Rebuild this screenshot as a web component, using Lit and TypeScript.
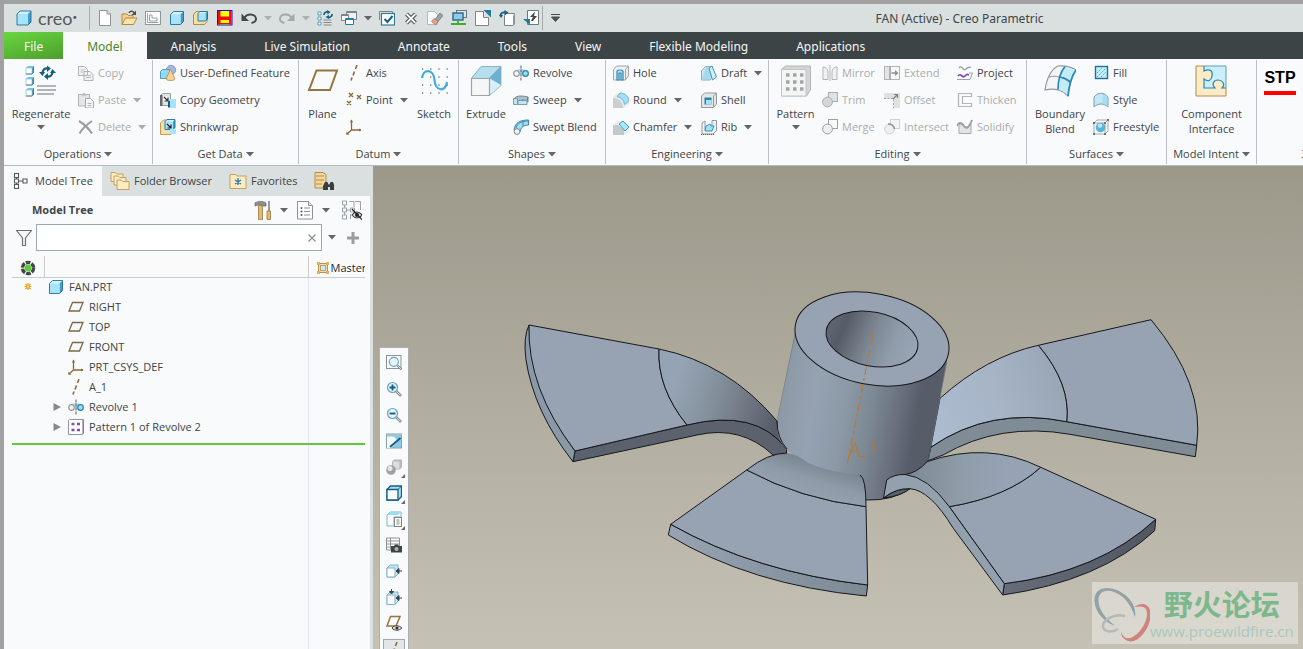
import { LitElement, html, svg, css, nothing } from "lit";
import type { TemplateResult } from "lit";
import { customElement, property } from "lit/decorators.js";
import { classMap } from "lit/directives/class-map.js";

/* ---------- icon artwork ---------- */

const cube = (x: number, y: number, s: number, d: number) => svg`
  <path d="M${x} ${y + d}l${d} ${-d}h${s}l${-d} ${d}z" fill="#d3f0fb"/>
  <path d="M${x + s} ${y + d}l${d} ${-d}v${s}l${-d} ${d}z" fill="#3f9ccb"/>
  <rect x=${x} y=${y + d} width=${s} height=${s} fill="#a5e4fa"/>
  <path d="M${x} ${y + d}l${d} ${-d}h${s}v${s}l${-d} ${d}h${-s}z" fill="none" stroke="#1b7099" stroke-width=".9"/>`;

const paleCube = (x: number, y: number, s: number, d: number) => svg`
  <path d="M${x} ${y + d}l${d} ${-d}h${s}l${-d} ${d}z" fill="#6cc6ec"/>
  <path d="M${x + s} ${y + d}l${d} ${-d}v${s}l${-d} ${d}z" fill="#2f86ad"/>
  <rect x=${x} y=${y + d} width=${s} height=${s} fill="#fff" stroke="#8cc3dc" stroke-width=".8"/>
  <path d="M${x} ${y + d + s}h${s}l${d} ${-d}" fill="none" stroke="#5a8296"/>`;

const sheet = svg`<path d="M2.500 .5h7.500l3.500 3.500v11.500h-11z" fill="#fff" stroke="#8d9394"/><path d="M10 .5v3.500h3.500" fill="#e1e5e5" stroke="#8d9394"/>`;

const axisMark = svg`<path d="M11 0L9.500 4M8.500 6.500L7 10.500M6 12.500L5 15.500" stroke="#8a6a36" stroke-width="1.6"/>`;

const csys = svg`<path d="M5.500 1v10H15M5.500 11L1 15" fill="none" stroke="#8a6a36" stroke-width="1.3"/><path d="M4 3.500h3L5.500 .500zM13 9.500v3l2.500-1.500zM.5 12.500l3 3-3.200.2z" fill="#8a6a36"/>`;

const revolve = svg`<path d="M3 6c2-3 8-3 10 0v3H3z" fill="#b8dcec"/><circle cx="3.500" cy="8.500" r="2.800" fill="#f2f4f5" stroke="#8f999d" stroke-width="1.200"/><circle cx="12.500" cy="8.500" r="2.800" fill="#9fdcf5" stroke="#2b87b3" stroke-width="1.300"/><path d="M8 .5v15" stroke="#55595a" stroke-dasharray="3 1"/>`;

const lens = svg`<path d="M10 10l5 5" stroke="#8b9194" stroke-width="2.600"/><path d="M10 10l4.500 4.500" stroke="#d5d9da" stroke-width="1"/><circle cx="6.500" cy="6.500" r="5" fill="#e6f5fb" stroke="#63a5c4" stroke-width="1.200"/>`;

const folder = (x: number, y: number, w: number, h: number) => svg`
  <path d="M${x} ${y}h${w * 0.35}l1.500 1.500h${w * 0.65 - 1.5}v${h - 1.5}h${-w}z" fill="#fdebc4" stroke="#c09a52" stroke-width=".9"/>`;

const swirl = svg`<path d="M3.500 8c0-3 2-5 5-4.500" fill="none" stroke="#155f85" stroke-width="2.200"/><path d="M8 .5l4 3-4 3.500z" fill="#155f85"/><path d="M0 7h6L3.500 11z" fill="#155f85"/><path d="M13.500 7c0 3-2 5-5 4.500" fill="none" stroke="#155f85" stroke-width="2.200"/><path d="M9 8v7l-4-3.500z" fill="#155f85"/><path d="M11 8h6L13.500 4z" fill="#155f85"/>`;

const icons: Record<string, [number, TemplateResult]> = {
  logo: [16, cube(1, 1, 11, 3)],
  newFile: [16, sheet],
  open: [16, svg`<path d="M1 14.500V4h5l1.500 1.500H12V8" fill="#f3cf8d" stroke="#b38a45"/><path d="M1 14.500L4.500 8H16l-3.500 6.500z" fill="#fce3ae" stroke="#b38a45"/><path d="M8 3c1-2 4-2.500 5 0" fill="none" stroke="#4c4f50" stroke-width="1.400"/><path d="M15 .5v4.500h-4.500z" fill="#4c4f50"/>`],
  drawing: [16, svg`<rect x=".5" y="1.500" width="15" height="13" fill="#fbfcfc" stroke="#8f9798"/><path d="M2.500 3.500v9h11M4.500 5h2.500v3h5v3h-7.500z" fill="none" stroke="#9aa2a3"/>`],
  part: [16, cube(1.5, 1.5, 10, 3)],
  assembly: [16, svg`<path d="M.5 4.500l2.500-3h11v10l-2.500 3H.500z" fill="#f6dda5" stroke="#b08c4b"/>${cube(5, 1.500, 7.500, 2)}`],
  stp: [16, svg`<rect x=".5" y=".5" width="14.500" height="14.500" fill="#ff0" stroke="#1212e0"/><path d="M1 1h2.500v13.500H1zM12 1h2.500v13.500H12zM3.500 6.500H12v3.500H3.500z" fill="#f10d0d"/><path d="M3 13.500h9" stroke="#f10d0d" stroke-width="1"/>`],
  undo: [16, svg`<path d="M3 8.500C6 3 14 3.500 15 8.500c.3 2.500-2 4-4.500 4.500" fill="none" stroke="#43484a" stroke-width="1.900"/><path d="M.5 3.500v7.500h7.500z" fill="#43484a"/>`],
  redo: [16, svg`<path d="M13 8.500C10 3 2 3.500 1 8.500c-.3 2.500 2 4 4.500 4.500" fill="none" stroke="#a3a9aa" stroke-width="1.900"/><path d="M15.500 3.500v7.500H8z" fill="#a3a9aa"/>`],
  regen: [16, svg`<path d="M1 2h3v3H1zM1 7h3v3H1zM1 12h3v3H1z" fill="#fff" stroke="#5d99b5"/><path d="M6.500 10h8M6.500 12.500h8M6.500 15h8" stroke="#83898a"/><path d="M7 5a3 3 0 0 1 4-3M15 4a3 3 0 0 1-4.500 3" fill="none" stroke="#155f85" stroke-width="1.700"/><path d="M10 0l3.500 2L10.500 4.500zM12 5v4L8.500 7z" fill="#155f85"/>`],
  windows: [16, svg`<path d="M5.500 1.500h10v8h-10z" fill="#eef1f1" stroke="#7d8586"/><path d="M.5 4.500h7v6h-7z" fill="#fff" stroke="#7d8586"/><path d="M.5 5.500h7M5.500 2.500h10" stroke="#7d8586"/><path d="M4.500 8.500h8v6h-8z" fill="#fff" stroke="#2d7aa0"/><path d="M4.500 9.500h8" stroke="#2d7aa0"/>`],
  check: [16, svg`<path d="M.5 10V1.500h13V4" fill="none" stroke="#7d8586"/><rect x="2.500" y="3.500" width="13" height="11.500" fill="#fff" stroke="#2d7aa0" stroke-width="1.200"/><path d="M5.500 9l3 3 5-6" fill="none" stroke="#155f85" stroke-width="2"/>`],
  closeAll: [16, svg`<path d="M3.500 4l9 9M12.500 4l-9 9" stroke="#55595a" stroke-width="4"/><path d="M3.700 4.200l8.600 8.600M12.300 4.200l-8.600 8.600" stroke="#fff" stroke-width="1.900"/>`],
  erase: [16, svg`<path d="M.5 1.500h7l3 3v10H.500z" fill="#f8f9f9" stroke="#b3b8b9"/><path d="M6 12l7-9 3 2.500-7 8.500z" fill="#9aa1a3" stroke="#6b6f70" stroke-width=".7"/><path d="M4.500 11.500l2.500-3 4 3-2.500 3.500z" fill="#e0a98c" stroke="#a95d4b" stroke-width=".6"/>`],
  screens: [16, svg`<rect x="5.500" y=".5" width="10" height="7" fill="#cfeaf5" stroke="#6b7a80"/><rect x="2" y="3" width="10" height="7" fill="#83d0f0" stroke="#3d6274" stroke-width="1.400"/><path d="M7 10v4M0 14h15" stroke="#3fae2c" stroke-width="1.800"/>`],
  fit: [16, svg`<path d="M.500 1.500h8v6h5v8H.500z" fill="#fff" stroke="#7d8586"/><path d="M8.500 0H16v7.500z" fill="#1f7aa5"/>`],
  paste2: [16, svg`<path d="M5.500 5.500l2-2h8.500v10l-2 2H5.500z" fill="#fff" stroke="#7d8586"/><path d="M14 5.500v10l2-2v-10z" fill="#8f9596"/><path d="M1.500 6c0-3 2-4 5-3.500" fill="none" stroke="#155f85" stroke-width="1.900"/><path d="M5.500 0l4 2.500-4 3zM0 5h4L2 8z" fill="#155f85"/>`],
  swap: [16, svg`<path d="M4.500 .5h11v14h-11z" fill="#fff" stroke="#6f7778"/><path d="M12 1.500L7 7h3l-2 4h2l4-5h-3z" fill="#43484a"/><path d="M0 9h7v6z" fill="#1f7aa5"/>`],

  regenerate: [32, svg`${paleCube(1, 1, 6, 2)}${paleCube(1, 12, 6, 2)}${paleCube(1, 23, 6, 2)}<g transform="translate(14 0)">${swirl}</g><path d="M12 21h19M12 25h19M12 29h17" stroke="#9b9fa0" stroke-width="1.600"/>`],
  copy: [16, svg`<path d="M.5 1.500h6l3 3v6h-9zM6 6.500h6l3 3v6H6z" fill="#f0f2f2" stroke="#afb5b6"/><path d="M2.500 5h4M2.500 7h3M8 10.500h5M8 12.500h5" stroke="#b9bebf"/>`],
  paste: [16, svg`<path d="M.5 2.500h11V14H.500z" fill="#e3e6e7" stroke="#afb5b6"/><path d="M3.500 3.500L6 .5l2.500 3z" fill="#b2b8b9"/><path d="M7.500 6.500h5l3 3v6.500h-8z" fill="#f6f7f7" stroke="#a5abac"/><path d="M9.500 11.500h4M9.500 13.500h4" stroke="#b0b6b7"/>`],
  remove: [16, svg`<path d="M1 2c5 3 10 8 13 12.500M14 2C9 5.500 4 10 1.500 14.500" fill="none" stroke="#9b9fa0" stroke-width="2.100"/>`],
  udf: [16, svg`<circle cx="11" cy="5" r="4.700" fill="#a9b6df" stroke="#7e8ec4" stroke-width=".8"/><path d="M.5 6.500l2-2h7v7l-2 2h-7z" fill="#96d9f4" stroke="#4b9fc1"/><path d="M10.500 4l4.500 10c-1 2-8 2-9 0z" fill="#f1d29a" stroke="#b48d4b" stroke-width=".8"/>`],
  copyGeom: [16, svg`<path d="M.500 3.500l2-2h8v6l-2 2v4h-8z" fill="#dfe3e4" stroke="#9ba2a3"/><path d="M0 3h2.500v11H0z" fill="#65696a"/><path d="M3.500 4.500h5v5h-5z" fill="#fff"/><path d="M4 5l4 4M8 5.500V9H4.500" fill="none" stroke="#333" stroke-width="1.200"/><path d="M9 7h7v3H9zM10 10h6v6h-6z" fill="#a5e4fa"/><path d="M8 9h2v6.500H8z" fill="#155f85"/>`],
  shrinkwrap: [16, svg`<path d="M.500 4l3-3h5v5l4 3v5l-2 1.500H.500z" fill="#f8e0ae" stroke="#c49b4e"/>${cube(5, .5, 8, 2)}<path d="M7 5l4 4M11 5.500V9H7.500" fill="none" stroke="#223" stroke-width="1.200"/><path d="M10 10h6v5h-6z" fill="#a5e4fa"/>`],

  plane: [32, svg`<path d="M9.500 5.500h20.500l-7 19.500H2z" fill="none" stroke="#94763e" stroke-width="2"/>`],
  axis: [16, axisMark],
  point: [16, svg`<path d="M3 1l4 4M7 1L3 5M11 3l4 4M15 3l-4 4M1 9l4 4M5 9l-4 4" stroke="#8a6a36" stroke-width="1.400"/>`],
  csys: [16, csys],
  sketch: [32, svg`<path d="M4 4h26M4 12h26M4 20h26M4 28h26" stroke="#333" stroke-width="1.200" stroke-dasharray="1.200 7"/><path d="M4 13C5 3 16 4 16.500 15s11 13 12.500 2" fill="none" stroke="#41abdb" stroke-width="2.200"/>`],
  extrude: [32, svg`<path d="M1 13L11 1h20L20 13z" fill="#b5deee"/><path d="M19 13L31 1v19L19 31z" fill="#d5f0fa"/><path d="M19 13L31 1v19z" fill="#6db0cf"/><path d="M1.500 13.500h18v17h-18z" fill="#f5f6f6" stroke="#9ea5a6" stroke-width="1.200"/><path d="M1.500 13.500L11 1.500h20v19L19.500 30.500M19.500 13.500l11.500-12" fill="none" stroke="#84a9ba" stroke-width=".8"/>`],
  revolve: [16, revolve],
  sweep: [16, svg`<path d="M1 8c0-4 6-5 14-3v5l-4-2c-2-1-3 1-4 2H5z" fill="#a9bfca" stroke="#6e8a97"/><path d="M5 8.500h9l1-3" fill="none" stroke="#3d7a99"/><path d="M.500 6.500h4v6h-4zM5 8.500h9v4H5z" fill="#c2e5f3" stroke="#7396a5" stroke-width=".9"/>`],
  sweptBlend: [16, svg`<path d="M1 11C2 3 8 1 15.500 1v5C11 6 8 8 7 13z" fill="#a6daf0" stroke="#3d87a8"/><path d="M3 9c1-5 6-7 12-7M10 2v5" fill="none" stroke="#3d87a8"/><circle cx="4" cy="12.500" r="2.900" fill="#eef3f5" stroke="#7c868a"/>`],

  hole: [16, svg`<path d="M.5 4.500l3-3.500h12v10l-3 4H.500z" fill="#eceeef" stroke="#a0a7a8"/><path d="M4 15V6.500c0-2 6-2 6 0V15h-2V8H6v7z" fill="#bfe8f7" stroke="#2b87b3" stroke-width="1.200"/><path d="M12.500 15V4.500l3-3.500" fill="none" stroke="#a0a7a8"/>`],
  round: [16, svg`<path d="M0 5l4-4h5l7 7v4l-5 4H0z" fill="#e9ebec"/><path d="M0 6c6 0 10 4 10 10H0z" fill="#c9ced0"/><path d="M7 1c5 0 8.500 3.500 9 8l-4.500 3.500C11 8.500 8.500 5.500 4 4.500z" fill="#a5def5" stroke="#56a9cb" stroke-width=".8"/>`],
  chamfer: [16, svg`<path d="M0 6l4-4h5l7 7v4l-5 3H0z" fill="#eaeced"/><path d="M0 6h5l6 5v5H0z" fill="#c3c9cb"/><path d="M6 5l4-3 6 6-4 4z" fill="#a9e6fa" stroke="#3c9ec5"/>`],
  draft: [16, svg`<path d="M.5 6l4-4.500h7v10L9 15H.500z" fill="#cbe7f1" stroke="#8da9b3"/><path d="M5.500 2L11 1v11l-5 2.500H.500z" fill="#a5d9ed"/><path d="M8 3l3-2 4.500 11-4 3z" fill="#d4f1fb" stroke="#3f97ba"/>`],
  shell: [16, svg`<path d="M.5 4l3-3h12v11l-3 3.500H.500z" fill="#e4e7e8" stroke="#929a9b"/><path d="M3.500 5.500h7v7h-7z" fill="#2d82a8"/><path d="M5 8h5.500v4.500H5z" fill="#a5e4fa"/><path d="M12.500 15V4l3-3" fill="none" stroke="#929a9b"/>`],
  rib: [16, svg`<path d="M1 15V4l3-2v9h7V1.500h4.500v10L12 15z" fill="#eef4f6" stroke="#8c9a9f"/><path d="M5 7l4-2 1 2h3l-2 5H4z" fill="#a2e0f7" stroke="#2b87b3" stroke-width=".9"/><path d="M0 15.500h13" stroke="#55595a" stroke-dasharray="1 1"/>`],

  pattern: [32, svg`<path d="M1.500 4.500l4-3.500h25v24l-4 6h-25z" fill="#d3d5d5" stroke="#b4b8b8"/><path d="M1.500 4.500h24.500V31H1.500z" fill="#f3f4f4" stroke="#c3c6c6"/>${[10, 17, 24].map((y) => svg`<path d="M6 ${y}h3.500M13 ${y}h3.500M20 ${y}h3.500" stroke="#a3a6a6" stroke-width="3.500"/>`)}`],
  mirror: [16, svg`<path d="M1 2v12.500h5V7c0-3-2-5-5-5zM15 2v12.500h-5V7c0-3 2-5 5-5z" fill="#f0f2f2" stroke="#b1b7b8"/><path d="M8 0v16" stroke="#b1b7b8"/>`],
  trim: [16, svg`<rect x="6.500" y=".5" width="9" height="9" fill="#dfe2e3" stroke="#a9afb0"/><circle cx="5.500" cy="10" r="4.900" fill="#d3d7d8" stroke="#a9afb0"/>`],
  merge: [16, svg`<rect x="6.500" y=".5" width="9" height="9" fill="#f7f8f8" stroke="#9ba2a3"/><circle cx="5.500" cy="10" r="4.900" fill="#eceeef" stroke="#9ba2a3"/>`],
  extend: [16, svg`<rect x=".5" y="1.500" width="15" height="13" fill="#f5f6f6" stroke="#b1b7b8"/><path d="M1 2h5v12H1z" fill="#e3e6e6"/><path d="M6 1.500v13M7.500 8h5" fill="none" stroke="#8b9192" stroke-width="1.300"/><path d="M11 5l3.500 3L11 11z" fill="#8b9192"/>`],
  offset: [16, svg`<path d="M0 1h16v15h-6V7H0z" fill="#dde1e2"/><path d="M0 6.500h9.500V16" fill="none" stroke="#a3a9aa" stroke-dasharray="2 1.500"/><path d="M9 7l4-4M10 2.500h3.500V6" fill="none" stroke="#7f8586" stroke-width="1.200"/>`],
  intersect: [16, svg`<rect x="6.500" y=".5" width="9" height="9" fill="#f3f4f4" stroke="#cfd3d4"/><circle cx="5.500" cy="10" r="4.900" fill="#eceeef" stroke="#cfd3d4"/><path d="M4 5c4 0 6 2 6.500 5" fill="none" stroke="#8b9192" stroke-width="1.500"/>`],
  project: [16, svg`<path d="M2 3c3-4 4 4 7 1s3-1 5-2" fill="none" stroke="#9ba2a3" stroke-width="1.300"/><path d="M12 8h3.500L13 14.500H0" fill="none" stroke="#9ba2a3"/><path d="M1 11c3-4 4 3 7 0s3-1 4-1" fill="none" stroke="#7c3fb4" stroke-width="1.700"/>`],
  thicken: [16, svg`<path d="M1.500 1.500h13v3h-9v7h9v3h-13z" fill="#f8f9f9" stroke="#b1b7b8" stroke-width="1.200"/>`],
  solidify: [16, svg`<path d="M2 5v9.500h12V5c-2 2-3 5-5 4S5 4 2 5z" fill="#e1e4e5" stroke="#a3a9aa"/><path d="M0 7c2-5 5-3 7 0s5 2 8-6" fill="none" stroke="#9ba2a3" stroke-width="2"/>`],

  boundary: [32, svg`<path d="M1 25C3 12 8 4 14 1q10-1 18 4c-5 7-7 16-8 26-6-7-14-8-23-6z" fill="#f3f5f6" stroke="#8f999d" stroke-width="1.200"/><path d="M20 1.500l12 3.500c-5 7-7 16-8 26-3-4-6-5-9-6 0-8 1-17 5-23.500z" fill="#c3ecfa"/><path d="M5 12c7-2 14 0 21 6" fill="none" stroke="#8f999d"/><path d="M21 1.500c-5 6-7 14-7 23M16 12c5 1 9 3 11 6M32 5c-5 7-7 16-8 26" fill="none" stroke="#2787b4" stroke-width="1.700"/>`],
  fill: [16, svg`<rect x="2.500" y="1.500" width="12" height="12" fill="#c4eefc" stroke="#1f6f99" stroke-width="1.400"/><path d="M4 8l5-5M4 12l9-9M8 12l5-5" stroke="#4e9fbe" stroke-dasharray="1.500 1"/>`],
  style: [16, svg`<path d="M1 5c4-5 10-5 14 0v10c-4-4-10-4-14 0z" fill="#c2e8f6" stroke="#7c9fac"/><path d="M10 2c4 0 5 3 5 3v10c-2-2-4-3-6-3z" fill="#8fd1ea" opacity=".5"/>`],
  freestyle: [16, svg`<circle cx="7.500" cy="8.500" r="4.800" fill="#58b4da"/><circle cx="7" cy="6.500" r="2.300" fill="#b8e6f8"/><path d="M1 4l3-3h11v11l-3 3H1zM1 4h11v11M12 4l3-3" fill="none" stroke="#8d9596" stroke-width=".8"/><path d="M0 3h2v2H0zM0 14h2v2H0zM11 3h2v2h-2zM14 0h2v2h-2zM11 14h2v2h-2z" fill="#6c7172"/>`],
  component: [32, svg`<path d="M1 1h30v30H1z" fill="#fdebc8"/><path d="M9 1h22v22H9z" fill="#c9effb"/><path d="M9 1v5c6-3 9 0 8 5s-4 6-8 3v9h11c-4-4-1-8 3-8s8 4 4 8h4v8H1V1z" fill="#fdebc8"/><path d="M9 1v5c6-3 9 0 8 5s-4 6-8 3v9h11c-4-4-1-8 3-8s8 4 4 8h4" fill="none" stroke="#2b87b3" stroke-width="1.200"/><path d="M9 1H1v30h30v-8" fill="none" stroke="#b08c4b"/><path d="M9 1h22v22" fill="none" stroke="#5f9db5"/>`],

  treeTab: [16, svg`<path d="M3.500 4.500v7M5.500 8H10" stroke="#55595a"/><path d="M1.500 .5h4v4h-4zM1.500 6h4v4h-4zM1.500 11.500h4v4h-4zM10 6h4v4h-4z" fill="#fff" stroke="#55595a" stroke-width="1.100"/>`],
  folders: [20, svg`${folder(1, 1.5, 12, 9)}${folder(4, 5, 12, 9)}${folder(7, 9, 12, 9.500)}`],
  favorites: [18, svg`${folder(1, 2.500, 16, 14)}<path d="M9 6v7M6 8l6 4M12 8l-6 4" stroke="#1f7aa5" stroke-width="1.300"/>`],
  search: [20, svg`<path d="M1 1.500h8l3 2V17H1z" fill="#f4d79a" stroke="#b08c4b"/><path d="M2 5h8M2 9h8M2 13h6" stroke="#b08c4b"/><path d="M9 19v-4l2-4h2.500l1 2.500h1L16.500 11H19l1.500 4v4H16v-3h-2v3z" fill="#3b3e40"/>`],
  tools: [20, svg`<path d="M1 3c3-2 8-2 11 0v3H8V5H5C3 5 2 6 1 6z" fill="#8c9294" stroke="#5c6162" stroke-width=".7"/><path d="M4.500 5.500h4V20h-4z" fill="#e0b873" stroke="#a07a3d" stroke-width=".8"/><path d="M15 1v10" stroke="#7f8587" stroke-width="1.600"/><path d="M13 11h3.500v8.500H13z" fill="#e7b765" stroke="#a07a3d" stroke-width=".8"/>`],
  listDoc: [20, svg`<path d="M1.500 1.500h11l4 4v13.500h-15z" fill="#fff" stroke="#8d9394"/><path d="M12.500 1.500v4h4" fill="#e1e5e5" stroke="#8d9394"/><path d="M8 8h6M8 11.500h6M8 15h6" stroke="#8d9394"/><circle cx="5.500" cy="8" r="1" fill="#55595a"/><circle cx="5.500" cy="11.500" r="1" fill="#55595a"/><circle cx="5.500" cy="15" r="1" fill="#55595a"/>`],
  hideTree: [20, svg`<path d="M.5 1h4v4h-4zM.500 8h4v4h-4zM.500 15h4v4h-4zM8.500 8h4v4h-4zM2.500 5v3M2.500 12v3M4.500 10h4M7.500 1.500H12V7M13 1.500h5.500V10M8.500 14v5" fill="none" stroke="#9ba2a3"/><path d="M10 15c3-4 7-4 10 0-3 4-7 4-10 0z" fill="#dfe2e3" stroke="#3b3e40" stroke-width="1.200"/><circle cx="15" cy="15" r="2" fill="#222"/><path d="M10 9l10 10.500" stroke="#222" stroke-width="1.200"/>`],
  funnel: [16, svg`<path d="M.500 .5h15L9.500 8v7.500h-3V8z" fill="#f5f6f6" stroke="#6b7172" stroke-width="1.200"/>`],
  plus: [12, svg`<path d="M6 0v12M0 6h12" stroke="#9a9e9f" stroke-width="3"/>`],
  cross: [10, svg`<path d="M1.500 1.500l7 7M8.500 1.500l-7 7" stroke="#8a8f90" stroke-width="1.200"/>`],
  status: [16, svg`<circle cx="8" cy="8" r="5.600" fill="none" stroke="#3f4749" stroke-width="3.400" stroke-dasharray="4.700 1.160"/><circle cx="8" cy="8" r="3.500" fill="#62c93a"/>`],
  spark: [16, svg`<path d="M8 4v7M4.500 7.500h7M5.500 5l5 5M10.500 5l-5 5" stroke="#f09a1e" stroke-width="1.200"/><circle cx="8" cy="7.500" r="1" fill="#fff0b0"/>`],
  master: [12, svg`<rect x="1.500" y="1.500" width="9" height="9" fill="#f3dcae" stroke="#b9914c"/><rect x="3.500" y="3.500" width="5" height="5" fill="#c5ecf9" stroke="#b9914c" stroke-width=".8"/><path d="M0 0h3v3H0zM9 0h3v3H9zM0 9h3v3H0zM9 9h3v3H9z" fill="#d9b36d"/>`],
  planeSmall: [16, svg`<path d="M4.500 3.500H15L11.500 12H1z" fill="none" stroke="#7c6844" stroke-width="1.300"/>`],
  patternSmall: [16, svg`<path d="M.5 1.500l1-1h14v14l-1 1H.500z" fill="#fff" stroke="#9390a6"/><path d="M15 1v14" stroke="#7b5aa6"/><path d="M3.500 5h3M9 5h3M3.500 11h3M9 11h3" stroke="#7a52a8" stroke-width="2.500"/>`],
  expander: [8, svg`<path d="M.5 0v8L8 4z" fill="#85898a"/>`],

  refit: [16, svg`<rect x=".5" y=".5" width="14.500" height="13" fill="#f6f7f7" stroke="#8d9394"/><g transform="translate(2 1) scale(.9)">${lens}</g>`],
  zoomIn: [16, svg`${lens}<path d="M6.500 3.500v6M3.500 6.500h6" stroke="#155f85" stroke-width="1.900"/>`],
  zoomOut: [16, svg`${lens}<path d="M3.500 6.500h6" stroke="#155f85" stroke-width="1.900"/>`],
  repaint: [16, svg`<rect x=".5" y="1" width="15" height="14" fill="#8ccbe5" stroke="#8aa1aa"/><path d="M1 3.500h5c3 0 5 3 5 6L5 15H1z" fill="#f1fafd"/><path d="M14.500 5L4 14" stroke="#155f85" stroke-width="1.900"/><path d="M.5 2h15" stroke="#b9c4c8"/>`],
  shading: [16, svg`<path d="M6 2.500l2-2h8V8l-2 2.500H6z" fill="#b4b8b9"/><path d="M7 2.500h6.500v7H7z" fill="#dcdede"/><circle cx="5" cy="11" r="4.800" fill="#9ea2a3"/><circle cx="4" cy="9.500" r="2.500" fill="#e6e8e8"/>`],
  display: [16, svg`<path d="M1 4.500l3.500-3.500h11v10.500L12 15H1z" fill="#a9dff3" stroke="#155f85" stroke-width="1.300"/><path d="M1 4.500h11V15H1z" fill="#fff" stroke="#155f85" stroke-width="1.300"/><path d="M12 4.500l3.500-3.500" stroke="#155f85"/>`],
  views: [16, svg`<path d="M1 4l3-3h11v5H8v9H1z" fill="#f6fbfd" stroke="#7cb4cc"/><path d="M1 4l3-3h11l-3 3z" fill="#9bdcf3"/><rect x="8.500" y="6.500" width="7" height="9" fill="#fff" stroke="#7f8586"/><path d="M10.500 9h3M10.500 11h3M10.500 13h3" stroke="#7f8586"/>`],
  viewMgr: [16, svg`<path d="M.500 1h13v12H.500zM.500 4h13M.500 7h13M.500 10h13M4.500 1v12" fill="#fff" stroke="#8d9394"/><path d="M5 9h3l1-1.500h3l1 1.500h3v6.500H5z" fill="#3f4547"/><circle cx="10.500" cy="12" r="2" fill="#aeb5b7"/>`],
  clipA: [16, svg`<path d="M1 5l3-3h8v9l-3 3H1z" fill="#bfe8f7" stroke="#7cb4cc"/><path d="M1 5h8v9H1z" fill="#fff" stroke="#7cb4cc"/><path d="M16 8h-5M13 5.500v5L10 8z" fill="#3f4547" stroke="#3f4547"/>`],
  clipB: [16, svg`<path d="M1 6l3-3h8v9l-3 3.500H1z" fill="#bfe8f7" stroke="#7cb4cc"/><path d="M1 6h8v9.500H1z" fill="#fff" stroke="#7cb4cc"/><path d="M16 9h-5M13 6.500v5L10 9zM5.500 0v4M3.500 2.500h4l-2 2.500z" fill="#3f4547" stroke="#3f4547"/>`],
  datumFilter: [16, svg`<path d="M4.500 1.500H14L10 11H1z" fill="none" stroke="#94763e" stroke-width="1.500"/><path d="M6 13c2-3 7-3 10 0-3 3-8 3-10 0z" fill="#dfe2e3" stroke="#3f4547"/><circle cx="11" cy="13" r="1.600" fill="#333"/>`],
};

const icon = (name: string) => {
  const [box, art] = icons[name];
  return html`<svg width=${box} height=${box} viewBox="0 0 ${box} ${box}" aria-hidden="true">${art}</svg>`;
};

const caret = html`<svg class="caret" width="8" height="5" viewBox="0 0 8 5" aria-hidden="true"><path d="M0 0h8L4 4.500z" fill="currentColor"/></svg>`;

const controlStyles = css`
  button { font: inherit; color: inherit; background: none; border: 0; padding: 0; margin: 0; white-space: nowrap; }
  svg { display: block; flex: none; }
  .caret { color: #626667; }
  button:disabled .caret { color: #a9adae; }
`;

/* ---------- title bar ---------- */

@customElement("title-bar")
class TitleBar extends LitElement {
  static styles = [controlStyles, css`
    :host { display: flex; align-items: center; height: 28px; background: #dae0df; color: #404547; }
    .brand { display: flex; align-items: center; gap: 6px; padding: 0 12px; }
    .word { font: 18px/20px "Lato", sans-serif; color: #54595b; }
    .word sup { font-size: 8px; line-height: 0; vertical-align: 5px; }
    .rule { width: 1px; height: 24px; background: #a7adae; }
    .tools { display: flex; align-items: center; gap: 8px; padding: 0 3px 0 7px; }
    .tools button { display: flex; align-items: center; justify-content: center; height: 20px; }
    .tools .drop { width: 8px; margin: 0 -1px; }
    .dim .caret { color: #abb1b2; }
    .more { padding: 0 8px; }
    h1 { flex: 1; margin: 0; padding: 1px 0 0 48px; font: 400 12px/16px "Noto Sans", sans-serif; text-align: center; }
  `];

  render() {
    const items = ["newFile", "open", "drawing", "part", "assembly", "stp", "undo", "-dim", "redo", "-dim", "regen", "windows", "-", "check", "closeAll", "erase", "screens", "fit", "paste2", "swap"];
    return html`
      <div class="brand">${icon("logo")}<span class="word">creo<sup>•</sup></span></div>
      <span class="rule"></span>
      <div class="tools">
        ${items.map((i) => i.startsWith("-")
          ? html`<button class=${classMap({ drop: true, dim: i === "-dim" })} aria-label="More">${caret}</button>`
          : html`<button aria-label=${i}>${icon(i)}</button>`)}
      </div>
      <span class="rule"></span>
      <button class="more" aria-label="Customize toolbar"><svg width="9" height="8" viewBox="0 0 9 8"><path d="M0 .5h9M.5 3h8L4.500 7.500z" fill="#4c5051" stroke="#4c5051"/></svg></button>
      <h1>FAN (Active) - Creo Parametric</h1>`;
  }
}

/* ---------- ribbon ---------- */

type Command = { icon: string; text: string; drop?: boolean; off?: boolean };
type Column = { big: Command } | { list: Command[] };
type Group = { key: string; title: string; columns: Column[] };

const cmd = (i: string, text: string, flags = ""): Command => ({ icon: i, text, drop: flags.includes("v"), off: flags.includes("x") });

const groups: Group[] = [
  { key: "operations", title: "Operations", columns: [
    { big: cmd("regenerate", "Regenerate", "v") },
    { list: [cmd("copy", "Copy", "x"), cmd("paste", "Paste", "xv"), cmd("remove", "Delete", "xv")] } ] },
  { key: "getdata", title: "Get Data", columns: [
    { list: [cmd("udf", "User-Defined Feature"), cmd("copyGeom", "Copy Geometry"), cmd("shrinkwrap", "Shrinkwrap")] } ] },
  { key: "datum", title: "Datum", columns: [
    { big: cmd("plane", "Plane") },
    { list: [cmd("axis", "Axis"), cmd("point", "Point", "v"), cmd("csys", "")] },
    { big: cmd("sketch", "Sketch") } ] },
  { key: "shapes", title: "Shapes", columns: [
    { big: cmd("extrude", "Extrude") },
    { list: [cmd("revolve", "Revolve"), cmd("sweep", "Sweep", "v"), cmd("sweptBlend", "Swept Blend")] } ] },
  { key: "engineering", title: "Engineering", columns: [
    { list: [cmd("hole", "Hole"), cmd("round", "Round", "v"), cmd("chamfer", "Chamfer", "v")] },
    { list: [cmd("draft", "Draft", "v"), cmd("shell", "Shell"), cmd("rib", "Rib", "v")] } ] },
  { key: "editing", title: "Editing", columns: [
    { big: cmd("pattern", "Pattern", "v") },
    { list: [cmd("mirror", "Mirror", "x"), cmd("trim", "Trim", "x"), cmd("merge", "Merge", "x")] },
    { list: [cmd("extend", "Extend", "x"), cmd("offset", "Offset", "x"), cmd("intersect", "Intersect", "x")] },
    { list: [cmd("project", "Project"), cmd("thicken", "Thicken", "x"), cmd("solidify", "Solidify", "x")] } ] },
  { key: "surfaces", title: "Surfaces", columns: [
    { big: cmd("boundary", "Boundary Blend") },
    { list: [cmd("fill", "Fill"), cmd("style", "Style"), cmd("freestyle", "Freestyle")] } ] },
  { key: "intent", title: "Model Intent", columns: [{ big: cmd("component", "Component Interface") }] },
];

@customElement("command-ribbon")
class CommandRibbon extends LitElement {
  static styles = [controlStyles, css`
    :host { display: block; background: #f8fafc; }
    .tabs { display: flex; gap: 2px; height: 27px; background: #3d4446; color: #f4f6f6; font: 12px/16px "Noto Sans", sans-serif; }
    .tabs button { padding: 2px 23px 0; }
    .tabs .file { padding: 2px 20px 0; margin-right: -2px; background: linear-gradient(165deg, #6ad641, #4c9e2c); }
    .tabs .current { padding: 2px 24px 0; margin-right: -1px; background: #f8fafc; color: #4b852c; }
    .groups { display: grid; grid-template-columns: 149px 146px 160px 147px 163px 258px 140px 90px minmax(0, 1fr); padding: 1px 0; border-bottom: 1px solid #b2bbbd; overflow: hidden; }
    .group { display: flex; flex-direction: column; border-right: 1px solid #bcc1c3; min-width: 0; }
    .group:last-child { border: 0; }
    .columns { display: grid; flex: 1; align-items: start; }
    .operations { grid-template-columns: 74px 1fr; }
    .getdata { padding-left: 7px; }
    .datum { grid-template-columns: 47px 64px 1fr; }
    .shapes { grid-template-columns: 54px 1fr; }
    .engineering { grid-template-columns: 88px 1fr; padding-left: 7px; }
    .editing { grid-template-columns: 53px 62px 73px 1fr; }
    .surfaces { grid-template-columns: 66px 1fr; }
    .list { display: grid; grid-auto-rows: 26px; gap: 1px; justify-items: start; }
    .list button { display: flex; align-items: center; gap: 4px; }
    .list .caret { margin-left: 3px; }
    button:disabled { color: #aaadae; }
    .big { display: flex; flex-direction: column; align-items: center; padding-top: 5px; }
    .big button { display: flex; flex-direction: column; align-items: center; line-height: 15px; }
    .big .label { margin-top: 9px; width: min-content; white-space: normal; }
    .big .caret { margin-top: 4px; }
    .title { display: flex; align-items: center; justify-content: center; gap: 4px; height: 20px; margin-top: 4px; }
    .title button { display: flex; align-items: center; gap: 3px; }
    .stp { justify-self: start; margin: 4px 0 0 7px; width: 32px; height: 31px; box-sizing: border-box; border-bottom: 4px solid #f00; background: #fff; color: #000; font: 700 16px/27px "Liberation Sans", sans-serif; text-align: center; }
    .clipped { justify-content: flex-start; padding-left: 44px; color: #7c5a4a; white-space: nowrap; }
  `];

  private button(c: Command) {
    return html`<button ?disabled=${c.off} aria-label=${c.text || "Coordinate System"}>${icon(c.icon)}${c.text ? html`<span>${c.text}</span>` : nothing}${c.drop ? caret : nothing}</button>`;
  }

  private column(c: Column) {
    if ("list" in c) return html`<div class="list">${c.list.map((x) => this.button(x))}</div>`;
    return html`<div class="big"><button>${icon(c.big.icon)}<span class="label">${c.big.text}</span>${c.big.drop ? caret : nothing}</button></div>`;
  }

  render() {
    return html`
      <nav class="tabs">
        <button class="file">File</button><button class="current">Model</button>
        ${["Analysis", "Live Simulation", "Annotate", "Tools", "View", "Flexible Modeling", "Applications"].map((t) => html`<button>${t}</button>`)}
      </nav>
      <div class="groups">
        ${groups.map((g) => html`
          <section class="group">
            <div class="columns ${g.key}">${g.columns.map((c) => this.column(c))}</div>
            <div class="title"><button>${g.title}${caret}</button></div>
          </section>`)}
        <section class="group">
          <div class="columns"><button class="stp">STP</button></div>
          <div class="title clipped">3D</div>
        </section>
      </div>`;
  }
}

/* ---------- navigator ---------- */

type Node = { icon: string; text: string; level: number; open?: boolean };

const nodes: Node[] = [
  { icon: "part", text: "FAN.PRT", level: 0 },
  { icon: "planeSmall", text: "RIGHT", level: 1 },
  { icon: "planeSmall", text: "TOP", level: 1 },
  { icon: "planeSmall", text: "FRONT", level: 1 },
  { icon: "csys", text: "PRT_CSYS_DEF", level: 1 },
  { icon: "axis", text: "A_1", level: 1 },
  { icon: "revolve", text: "Revolve 1", level: 1, open: false },
  { icon: "patternSmall", text: "Pattern 1 of Revolve 2", level: 1, open: false },
];

@customElement("model-navigator")
class ModelNavigator extends LitElement {
  @property() query = "";

  static styles = [controlStyles, css`
    :host { display: flex; flex-direction: column; background: #f8fafc; border-right: 3px solid #dae0df; box-sizing: border-box; min-height: 0; }
    .tabs { display: flex; height: 30px; background: #dae0df; }
    .tabs button { display: flex; align-items: center; gap: 4px; padding: 0 9px 0 8px; }
    .tabs .current { gap: 6px; padding: 0 9px; background: #f8fafc; }
    .head { display: flex; align-items: center; height: 28px; padding: 0 8px 0 28px; }
    h2 { flex: 1; margin: 0; font-size: 11px; font-weight: 700; color: #3f4547; }
    .head .drop { padding: 0 8px 0 6px; }
    .head .last { padding-right: 12px; }
    .filter { display: flex; align-items: center; height: 27px; padding: 0 10px 0 12px; gap: 4px; }
    .box { flex: 1; display: flex; align-items: center; height: 27px; box-sizing: border-box; border: 1px solid #9cabac; background: #fff; padding-right: 4px; }
    input { flex: 1; min-width: 0; border: 0; outline: 0; background: none; font: inherit; }
    .filter .drop { padding: 0 6px 0 2px; }
    .filter .add { padding: 0 1px; }
    .tree { flex: 1; display: grid; margin: 5px 5px 0 8px; min-height: 0; overflow: hidden; }
    table { border-collapse: collapse; table-layout: fixed; width: 100%; height: 100%; }
    .c1 { width: 32px; }
    .c3 { width: 57px; }
    th, td { padding: 0; text-align: left; font-weight: 400; }
    thead tr { height: 21px; background: #fafafb; }
    th { border-bottom: 1px solid #c9cccd; padding-top: 3px; }
    th + th { border-left: 1px solid #c9cccd; color: #1d2a33; }
    td:last-child { border-left: 1px solid #e4e7e9; }
    tbody tr { height: 20px; }
    tbody .insert { height: 7px; }
    .insert td { border-bottom: 2px solid #60c83c; }
    tbody .rest { height: auto; }
    .center svg { margin: 0 auto; }
    .cell { display: flex; align-items: center; gap: 5px; padding-left: 3px; white-space: nowrap; overflow: hidden; }
    .row { padding-left: 4px; }
    .deep { padding-left: 24px; }
    .node { padding-left: 9px; gap: 7px; }
    .node span { display: flex; align-items: center; gap: 5px; }
    .master { gap: 2px; padding-left: 8px; }
  `];

  render() {
    return html`
      <nav class="tabs">
        <button class="current">${icon("treeTab")}<span>Model Tree</span></button>
        <button>${icon("folders")}<span>Folder Browser</span></button>
        <button>${icon("favorites")}<span>Favorites</span></button>
        <button aria-label="Search">${icon("search")}</button>
      </nav>
      <div class="head">
        <h2>Model Tree</h2>
        <button aria-label="Settings">${icon("tools")}</button><button class="drop" aria-label="Settings menu">${caret}</button>
        <button aria-label="Show">${icon("listDoc")}</button><button class="drop last" aria-label="Show menu">${caret}</button>
        <button aria-label="Hide columns">${icon("hideTree")}</button>
      </div>
      <div class="filter">
        ${icon("funnel")}
        <div class="box"><input type="text" aria-label="Filter model tree" .value=${this.query}><button aria-label="Clear">${icon("cross")}</button></div>
        <button class="drop" aria-label="Filter menu">${caret}</button>
        <button class="add" aria-label="Add filter">${icon("plus")}</button>
      </div>
      <div class="tree">
        <table>
          <colgroup><col class="c1"><col><col class="c3"></colgroup>
          <thead><tr>
            <th class="center" aria-label="Status">${icon("status")}</th><th aria-label="Name"></th>
            <th><div class="cell master">${icon("master")}Master</div></th>
          </tr></thead>
          <tbody>
            ${nodes.map((n) => html`<tr>
              <td class="center">${n.level === 0 ? icon("spark") : nothing}</td>
              <td>${n.open === undefined
                ? html`<div class=${classMap({ cell: true, row: n.level === 0, deep: n.level > 0 })}>${icon(n.icon)}${n.text}</div>`
                : html`<div class="cell node"><button aria-label="Expand ${n.text}">${icon("expander")}</button><span>${icon(n.icon)}${n.text}</span></div>`}</td>
              <td></td></tr>`)}
            <tr class="insert"><td></td><td></td><td></td></tr>
            <tr class="rest"><td></td><td></td><td></td></tr>
          </tbody>
        </table>
      </div>`;
  }
}

/* ---------- graphics area ---------- */

@customElement("graphics-view")
class GraphicsView extends LitElement {
  static styles = [controlStyles, css`
    :host { display: block; position: relative; overflow: hidden; background: linear-gradient(#9c998b, #c5c2b5); }
    .scene { position: absolute; inset: 0; width: 100%; height: 100%; }
    .edges path, .edges ellipse { stroke: #16181c; stroke-width: 1; stroke-linejoin: round; }
    .bar { position: absolute; left: 6px; top: 181px; display: flex; flex-direction: column; align-items: center; gap: 6px; width: 30px; padding: 5px 0; box-sizing: border-box; background: #f8fafc; border: 1px solid #adaeb2; }
    .bar button { position: relative; height: 20px; padding: 2px 0; box-sizing: border-box; }
    .more::after { content: ""; position: absolute; right: -3px; bottom: -1px; border: 2px solid transparent; border-right-color: #65696a; border-bottom-color: #65696a; }
    .bar .pressed { width: 22px; height: 22px; padding: 2px; border: 1px solid #a3a7aa; background: #e3e6e9; }
    .mark { position: absolute; right: 5px; bottom: 5px; display: flex; align-items: center; width: 206px; height: 62px; background: rgba(226, 223, 216, .75); }
    .mark p { margin: 0; text-align: center; white-space: nowrap; }
    .mark .zh { font: 700 29px/36px "Noto Sans CJK SC", sans-serif; color: #7db88c; }
    .mark .url { font-size: 15px; line-height: 20px; color: #a9c8bb; }
  `];

  render() {
    const tools: [string, boolean][] = [["refit", false], ["zoomIn", false], ["zoomOut", false], ["repaint", false], ["shading", true], ["display", true], ["views", true], ["viewMgr", false], ["clipA", false], ["clipB", false], ["datumFilter", false]];
    return html`
      <svg class="scene" viewBox="373 166 930 483" preserveAspectRatio="xMidYMid slice" role="img" aria-label="Fan model">
        <defs>
          <linearGradient id="hub" gradientUnits="userSpaceOnUse" x1="783" y1="395" x2="940" y2="422">
            <stop offset="0" stop-color="#8d99a6"/><stop offset=".2" stop-color="#95a2b2"/><stop offset=".4" stop-color="#8b98a5"/><stop offset=".55" stop-color="#7d8a95"/><stop offset=".72" stop-color="#6b717e"/><stop offset=".85" stop-color="#575d69"/><stop offset="1" stop-color="#555b67"/>
          </linearGradient>
          <linearGradient id="bore" gradientUnits="userSpaceOnUse" x1="828" y1="330" x2="916" y2="348">
            <stop offset="0" stop-color="#5f6671"/><stop offset=".16" stop-color="#565c67"/><stop offset=".34" stop-color="#6e747f"/><stop offset=".5" stop-color="#7d8994"/><stop offset=".75" stop-color="#8f9cab"/><stop offset="1" stop-color="#98a5b5"/>
          </linearGradient>
          <linearGradient id="bendL" gradientUnits="userSpaceOnUse" x1="668" y1="405" x2="774" y2="440">
            <stop offset="0" stop-color="#96a3b4"/><stop offset=".35" stop-color="#84919d"/><stop offset=".65" stop-color="#727984"/><stop offset="1" stop-color="#535965"/>
          </linearGradient>
          <linearGradient id="bendR" gradientUnits="userSpaceOnUse" x1="935" y1="425" x2="1066" y2="385">
            <stop offset="0" stop-color="#acbbcf"/><stop offset=".5" stop-color="#a6b4c6"/><stop offset="1" stop-color="#98a5b4"/>
          </linearGradient>
          <linearGradient id="bendB" gradientUnits="userSpaceOnUse" x1="818" y1="462" x2="806" y2="500">
            <stop offset="0" stop-color="#7a8590"/><stop offset=".45" stop-color="#8d9aa7"/><stop offset="1" stop-color="#97a3b4"/>
          </linearGradient>
          <linearGradient id="bendF" gradientUnits="userSpaceOnUse" x1="915" y1="478" x2="1005" y2="492">
            <stop offset="0" stop-color="#7f8b95"/><stop offset=".5" stop-color="#8f9ca9"/><stop offset="1" stop-color="#97a3b4"/>
          </linearGradient>
          <linearGradient id="rimB"><stop offset="0" stop-color="#97a3b2"/><stop offset="1" stop-color="#7d8993"/></linearGradient>
          <linearGradient id="rimF"><stop offset="0" stop-color="#676e79"/><stop offset="1" stop-color="#515762"/></linearGradient>
        </defs>
        <g class="edges">
          <path fill="#7f8b95" d="M1066.700 421.700L1196.700 445.300L1195.300 456.700L1070 434.300Q1000 422 943 455L927 461L930.700 447.300Q990 406 1066.700 421.700Z"/>
          <path fill="#97a2b2" d="M1038.300 345.300L1151 319.700Q1205 384 1196.700 445.300L1066.700 421.700Q1071 384 1038.300 345.300Z"/>
          <path fill="url(#bendR)" d="M940 398.300Q986 357 1038.300 345.300Q1071 384 1066.700 421.700Q990 406 930.700 447.300Z"/>

          <path fill="#5c626d" d="M575 451L687 425Q756 408 786.500 449V454L773 455Q741 425 697 435L573 461.700Z"/>
          <path fill="#8b98a7" d="M529 325Q523 337 526 360Q534 412 573 461.700L575 451Q530 390 529 325Z"/>
          <path fill="#97a2b2" d="M529 325L659 349Q657 388 687 425L575 451Q527 388 529 325Z"/>
          <path fill="url(#bendL)" d="M659 349Q728 363 777 421Q777 433 786.500 449Q756 408 687 425Q657 388 659 349Z"/>
        </g>
        <path fill="url(#hub)" d="M795.500 332L777 424Q776 439 787 450L812 468L862 478L866 500Q893 501 911 488L928 461L947 360Z"/>
        <path d="M777 421Q777 438 787 449M866 500Q893 501 911 488M928 461L931 446" fill="none" stroke="#16181c"/>
        <path d="M795.500 332L777 421M946.700 363L928 461" fill="none" stroke="#6b7480" stroke-width=".7"/>
        <g class="edges">
          <ellipse cx="872" cy="339" rx="77.900" ry="45.500" transform="rotate(10.700 872 339)" fill="#97a3b3"/>
          <ellipse cx="872" cy="339" rx="46.600" ry="27" transform="rotate(11.400 872 339)" fill="url(#bore)"/>

          <path fill="url(#rimB)" d="M670.700 524.300L668.300 535Q750 585 866.300 596L867.700 585Q755 572 670.700 524.300Z"/>
          <path fill="#97a2b2" d="M746.700 470L670.700 524.300Q755 572 867.700 585L866 506.700Q800 499 746.700 470Z"/>
        </g>
        <path fill="url(#bendB)" d="M746.700 470Q768 453 787 453Q797 454 808 463Q832 473 860 475Q866 478 866 506.700Q800 499 746.700 470Z"/>
        <path d="M746.700 470Q768 453 787 453M860 475Q866 478 866 506.700Q800 499 746.700 470" fill="none" stroke="#16181c"/>
        <g class="edges">
          <path fill="#59606b" d="M883.500 498Q896 488 910 488.700Q901 496 883.500 498Z"/>
          <path fill="url(#rimF)" d="M1155.700 519.300L1154.700 530.700Q1100 581 1002.700 595L1004.300 583.700Q1099 572 1155.700 519.300Z"/>
          <path fill="#97a2b2" d="M1040.700 467.300L1155.700 519.300Q1099 572 1004.300 583.700L949.300 506.700Q1008 497 1040.700 467.300Z"/>
        </g>
        <path fill="url(#bendF)" d="M905 474.500Q917 473 927 461.700Q987 441 1040.700 467.300Q1008 497 949.300 506.700Q928 477 905 474.500Z"/>
        <path d="M905 474.500Q917 473 927 461.700Q987 441 1040.700 467.300Q1008 497 949.300 506.700" fill="none" stroke="#16181c"/>
        <g class="edges">
          <path fill="#93a1ae" d="M886.700 480Q894 474 905 474.500Q928 477 949.300 506.700L1004.300 583.700L1002.700 595L953.300 528.300Q930 490 910 488.700Q896 488 883.500 498Z"/>
        </g>
        <path d="M873.500 331L847.500 463" stroke="#c0761f" stroke-dasharray="9 3 3 3"/>
        <path d="M849.500 456l5-14 5 14M851.500 451h6M859 456.500h9M871 445l3-3v12" fill="none" stroke="#c0761f"/>
      </svg>
      <div class="bar">
        ${tools.map(([n, more]) => html`<button class=${classMap({ more })} aria-label=${n}>${icon(n)}</button>`)}
        <button class="pressed" aria-label="axis display">${icon("axis")}</button>
      </div>
      <div class="mark">
        <svg width="58" height="60" viewBox="0 0 58 60" aria-hidden="true">
          <path fill-rule="evenodd" fill="#93a2a5" d="M4 25C-2 8 10 1 25 7c11 5 20 15 18 27C38 19 30 11 19 8 8 6 4 14 8 25c3 7 8 12 15 18C14 39 7 33 4 25z"/>
          <path fill="#d0837d" d="M42 24c12-8 19 1 16 13-3 13-14 24-22 21-5-2-7-5-7-9 3 8 9 8 16 2 8-7 12-19 9-25-2-3-6-3-12-2z"/>
          <path fill="none" stroke="#b5b8b9" stroke-width="2.500" d="M33 33C22 30 11 37 11 43c0 6 9 7 15 3"/>
        </svg>
        <div><p class="zh">野火论坛</p><p class="url">www.proewildfire.cn</p></div>
      </div>`;
  }
}

@customElement("app-root")
class AppRoot extends LitElement {
  static styles = css`
    :host { display: flex; flex-direction: column; height: 100vh; box-sizing: border-box; border: solid #a1a1a1; border-width: 4px 0 0 4px; overflow: hidden; font: 11px/16px "Open Sans", "Noto Sans", sans-serif; color: #3f4446; }
    .work { flex: 1; display: grid; grid-template-columns: 369px minmax(0, 1fr); min-height: 0; }
  `;

  render() {
    return html`
      <title-bar></title-bar>
      <command-ribbon></command-ribbon>
      <main class="work"><model-navigator></model-navigator><graphics-view></graphics-view></main>`;
  }
}
